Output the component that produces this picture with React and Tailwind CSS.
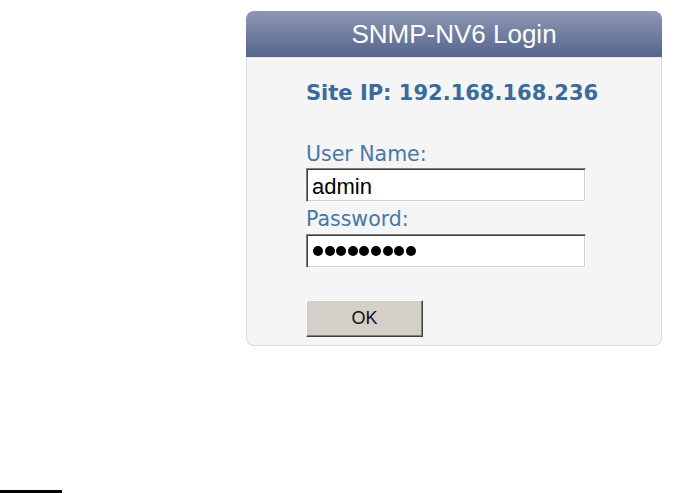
import React from "react";

function LoginPanel() {
    const dots = Array.from({ length: 9 });

    return (
        <div className="ml-[246px] mt-[11px] w-[416px]">

            {/* Header */}
            <div className="h-[47px] rounded-t-[8px] bg-gradient-to-b from-[#8d98b4] to-[#56658d] border-b border-[#e6e8ee] flex items-center justify-center">
                <span className="text-[26px] leading-[29px] text-white font-['Liberation_Sans',Arial,sans-serif]">
                    SNMP-NV6 Login
                </span>
            </div>

            {/* Body */}
            <div className="bg-[#f5f5f5] border-x border-b border-[#dddddd] rounded-b-[8px] pl-[59px] pt-[23px] pb-[8px] font-['DejaVu_Sans',Verdana,sans-serif]">
                <div className="text-[21px] leading-[24px] font-bold text-[#3a6a9e]">
                    Site IP: 192.168.168.236
                </div>

                <div className="mt-[37px] text-[20.5px] leading-[24px] text-[#4677ad]">User Name:</div>
                <input
                    readOnly
                    defaultValue="admin"
                    className="mt-[2px] block w-[280px] h-[34px] bg-white border border-t-[#808080] border-l-[#808080] border-r-white border-b-white shadow-[inset_1px_1px_0_#404040,inset_-1px_-1px_0_#d4d0c8] pl-[5px] pt-[3px] text-[22px] text-black outline-none font-['Liberation_Sans',Arial,sans-serif]"
                />

                <div className="mt-[5px] text-[20.5px] leading-[24px] text-[#4677ad]">Password:</div>
                <div className="mt-[3px] w-[280px] h-[34px] bg-white border border-t-[#808080] border-l-[#808080] border-r-white border-b-white shadow-[inset_1px_1px_0_#404040,inset_-1px_-1px_0_#d4d0c8] pl-[6px] flex items-center gap-[1.6px]">
                    {dots.map((_, i) => (
                        <span key={i} className="w-[10px] h-[10px] rounded-full bg-black" />
                    ))}
                </div>

                <button className="mt-[32px] block w-[117px] h-[37px] bg-[#d4d0c8] border border-t-white border-l-white border-r-[#404040] border-b-[#404040] shadow-[inset_-1px_-1px_0_#808080] text-[18px] text-[#111] font-['Liberation_Sans',Arial,sans-serif]">
                    OK
                </button>
            </div>

        </div>
    );
}

export default function App() {
    return (
        <div className="h-[493px] flex flex-col bg-white">
            <LoginPanel />
            <div className="mt-auto w-[62px] h-[3px] bg-black" />
        </div>
    );
}
